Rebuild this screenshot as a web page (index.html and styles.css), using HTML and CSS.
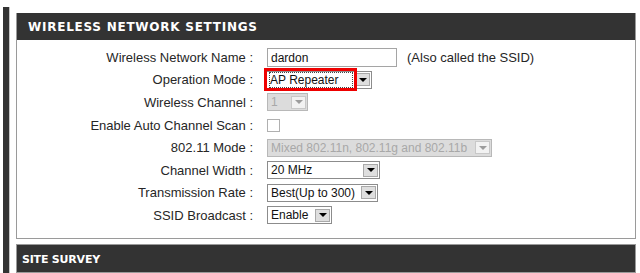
FILE: index.html
```html
<!DOCTYPE html>
<html lang="en">
<head>
    <meta charset="UTF-8">
    <title>Wireless Network Settings</title>
    <link rel="stylesheet" href="styles.css">
</head>
<body>
    <div class="layout">
        <div class="sidebar"></div>

        <div class="main">
            <div class="box">
                <h2 class="box-title">Wireless Network Settings</h2>
                <div class="form">
                    <div class="label">Wireless Network Name :</div>
                    <div class="field">
                        <div class="text-input">dardon</div>
                        <span class="hint">(Also called the SSID)</span>
                    </div>

                    <div class="label">Operation Mode :</div>
                    <div class="field">
                        <div class="select select-mode">
                            <span class="select-value focused">AP Repeater</span>
                            <span class="select-btn"><i class="arrow"></i></span>
                            <div class="highlight"></div>
                        </div>
                    </div>

                    <div class="label">Wireless Channel :</div>
                    <div class="field">
                        <div class="select select-channel disabled">
                            <span class="select-value">1</span>
                            <span class="select-btn"><i class="arrow"></i></span>
                        </div>
                    </div>

                    <div class="label">Enable Auto Channel Scan :</div>
                    <div class="field">
                        <div class="checkbox disabled"></div>
                    </div>

                    <div class="label">802.11 Mode :</div>
                    <div class="field">
                        <div class="select select-80211 disabled">
                            <span class="select-value">Mixed 802.11n, 802.11g and 802.11b</span>
                            <span class="select-btn"><i class="arrow"></i></span>
                        </div>
                    </div>

                    <div class="label">Channel Width :</div>
                    <div class="field">
                        <div class="select select-width">
                            <span class="select-value">20 MHz</span>
                            <span class="select-btn"><i class="arrow"></i></span>
                        </div>
                    </div>

                    <div class="label">Transmission Rate :</div>
                    <div class="field">
                        <div class="select select-rate">
                            <span class="select-value">Best(Up to 300)</span>
                            <span class="select-btn"><i class="arrow"></i></span>
                        </div>
                    </div>

                    <div class="label">SSID Broadcast :</div>
                    <div class="field">
                        <div class="select select-ssid">
                            <span class="select-value">Enable</span>
                            <span class="select-btn"><i class="arrow"></i></span>
                        </div>
                    </div>
                </div>
            </div>

            <div class="box box-survey">
                <h2 class="box-title">Site Survey</h2>
            </div>
        </div>
    </div>
</body>
</html>
```

FILE: styles.css
```css
:root {
    --header-bg: #333333;
    --box-border: #9a9a9a;
    --label-color: #262626;
    --field-border: #8c8c8c;
    --btn-bg: #dedede;
    --disabled-bg: #dcdcdc;
    --disabled-text: #a8a8a8;
}

body {
    margin: 0;
    background-color: white;
    font-family: "Liberation Sans", Arial, sans-serif;
    color: var(--label-color);
}

.layout {
    display: flex;
    min-height: 100vh;
}

.sidebar {
    width: 6px;
    margin: 7px 0 0 3px;
    background-color: #333;
    border-right: 1px solid #c4c4c4;
}

.main {
    display: flex;
    flex-direction: column;
    gap: 5px;
    width: 620px;
    margin-left: 6px;
    padding-top: 13px;
}

.box {
    border: 1px solid var(--box-border);
    border-top: none;
}

.box-title {
    margin: 0;
    height: 27px;
    padding-left: 11px;
    background-color: var(--header-bg);
    color: white;
    font-family: "DejaVu Sans", Verdana, sans-serif;
    font-size: 12px;
    font-weight: bold;
    letter-spacing: 0.75px;
    line-height: 28px;
    text-transform: uppercase;
}

.box-survey {
    border-top: 1px solid var(--box-border);
    flex: 1;
}

.box-survey .box-title {
    padding-left: 5px;
    font-size: 11px;
    letter-spacing: -0.2px;
    line-height: 30px;
}

.form {
    display: grid;
    grid-template-columns: 236px auto;
    grid-auto-rows: 22.6px;
    column-gap: 14px;
    align-items: center;
    padding: 6px 0 11px;
}

.label {
    text-align: right;
    font-size: 13px;
    white-space: nowrap;
}

.field {
    display: flex;
    align-items: center;
    gap: 10px;
    font-size: 12px;
    color: #111;
}

.hint {
    font-size: 13px;
    color: var(--label-color);
}

.text-input {
    box-sizing: border-box;
    width: 130px;
    height: 19px;
    padding: 2px 3px 0;
    border: 1px solid #a5a5a5;
    line-height: 15px;
}

.select {
    position: relative;
    box-sizing: border-box;
    display: flex;
    align-items: center;
    height: 18px;
    padding: 0 1px 0 3px;
    border: 1px solid var(--field-border);
    background-color: white;
}

.select-value {
    flex: 1;
    white-space: nowrap;
    overflow: hidden;
    line-height: 14px;
}

.select-value.focused {
    outline: 1px dotted #444;
    outline-offset: 0;
    margin-right: 3px;
}

.select-btn {
    display: flex;
    align-items: center;
    justify-content: center;
    box-sizing: border-box;
    width: 15px;
    height: 13px;
    border: 1px solid #a9a9a9;
    background-color: var(--btn-bg);
}

.arrow {
    width: 0;
    height: 0;
    border-left: 4px solid transparent;
    border-right: 4px solid transparent;
    border-top: 4px solid black;
}

.select.disabled {
    border-color: #b8b8b8;
    background-color: var(--disabled-bg);
    color: var(--disabled-text);
}

.select.disabled .select-btn {
    background-color: #f2f2f2;
    border-color: #c8c8c8;
}

.select.disabled .arrow {
    border-top-color: #9c9c9c;
}

.select-mode { width: 106px; margin-left: -1px; }
.select-channel { width: 41px; }
.select-80211 { width: 225px; }
.select-width { width: 113px; }
.select-rate { width: 111px; }
.select-ssid { width: 65px; }

.checkbox {
    box-sizing: border-box;
    width: 13px;
    height: 13px;
    border: 1px solid #b0b0b0;
    background-color: white;
}

/* red annotation box drawn over the operation mode field */
.highlight {
    position: absolute;
    left: -3px;
    top: -4px;
    width: 93px;
    height: 23px;
    box-sizing: border-box;
    border: 3px solid #ee0000;
}
```
